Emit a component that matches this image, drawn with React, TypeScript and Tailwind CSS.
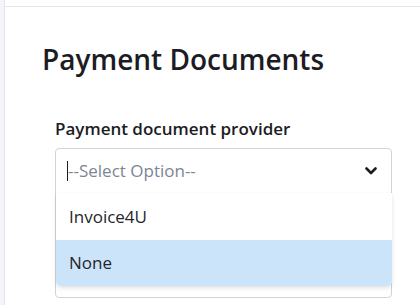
const options = [
  { label: "Invoice4U", active: false },
  { label: "None", active: true },
];

export default function App() {
  return (
    <div className="flex h-[305px] w-[420px] overflow-hidden bg-white font-['Open_Sans',sans-serif]">
      <div className="w-[5px] shrink-0 border-r border-[#e4e4ee] bg-[#f5f5f9]" />
      <div className="flex flex-1 flex-col">
        <div className="h-[7px] shrink-0 border-b border-[#e4e4ee]" />
        <div className="pl-[37px] pt-[33px]">
          <h1 className="text-[28px] font-semibold leading-[38px] text-[#1c1c24]">
            Payment Documents
          </h1>
          <div className="ml-[13px] mt-[39px] w-[337px]">
            <label className="block text-[17px] font-semibold leading-[24px] text-[#1c1c24]">
              Payment document provider
            </label>
            <div className="relative mt-[7px] h-[150px] rounded-[4px] border border-[#cfd4dc] bg-white">
              <div className="flex h-[44px] items-center justify-between pl-[11px] pr-[14px]">
                <div className="flex items-center">
                  <span className="h-[20px] w-px bg-[#1c1c24]" />
                  <span className="text-[17px] text-[#7c8594]">--Select Option--</span>
                </div>
                <svg width="12" height="8" viewBox="0 0 12 8" className="text-[#1c1c24]">
                  <polyline
                    points="1.5,1.5 6,6 10.5,1.5"
                    fill="none"
                    stroke="currentColor"
                    strokeWidth="2.6"
                    strokeLinecap="round"
                    strokeLinejoin="round"
                  />
                </svg>
              </div>
              <ul className="absolute left-0 right-[-1px] top-[44px] overflow-hidden rounded-b-[5px] bg-white shadow-[0_2px_4px_rgba(0,0,0,0.12)]">
                {options.map((o) => (
                  <li
                    key={o.label}
                    className={`flex items-center pl-[13px] text-[17px] text-[#25252d] ${
                      o.active ? "h-[46px] bg-[#cce4f9]" : "h-[47px]"
                    }`}
                  >
                    {o.label}
                  </li>
                ))}
              </ul>
            </div>
          </div>
        </div>
      </div>
    </div>
  );
}
